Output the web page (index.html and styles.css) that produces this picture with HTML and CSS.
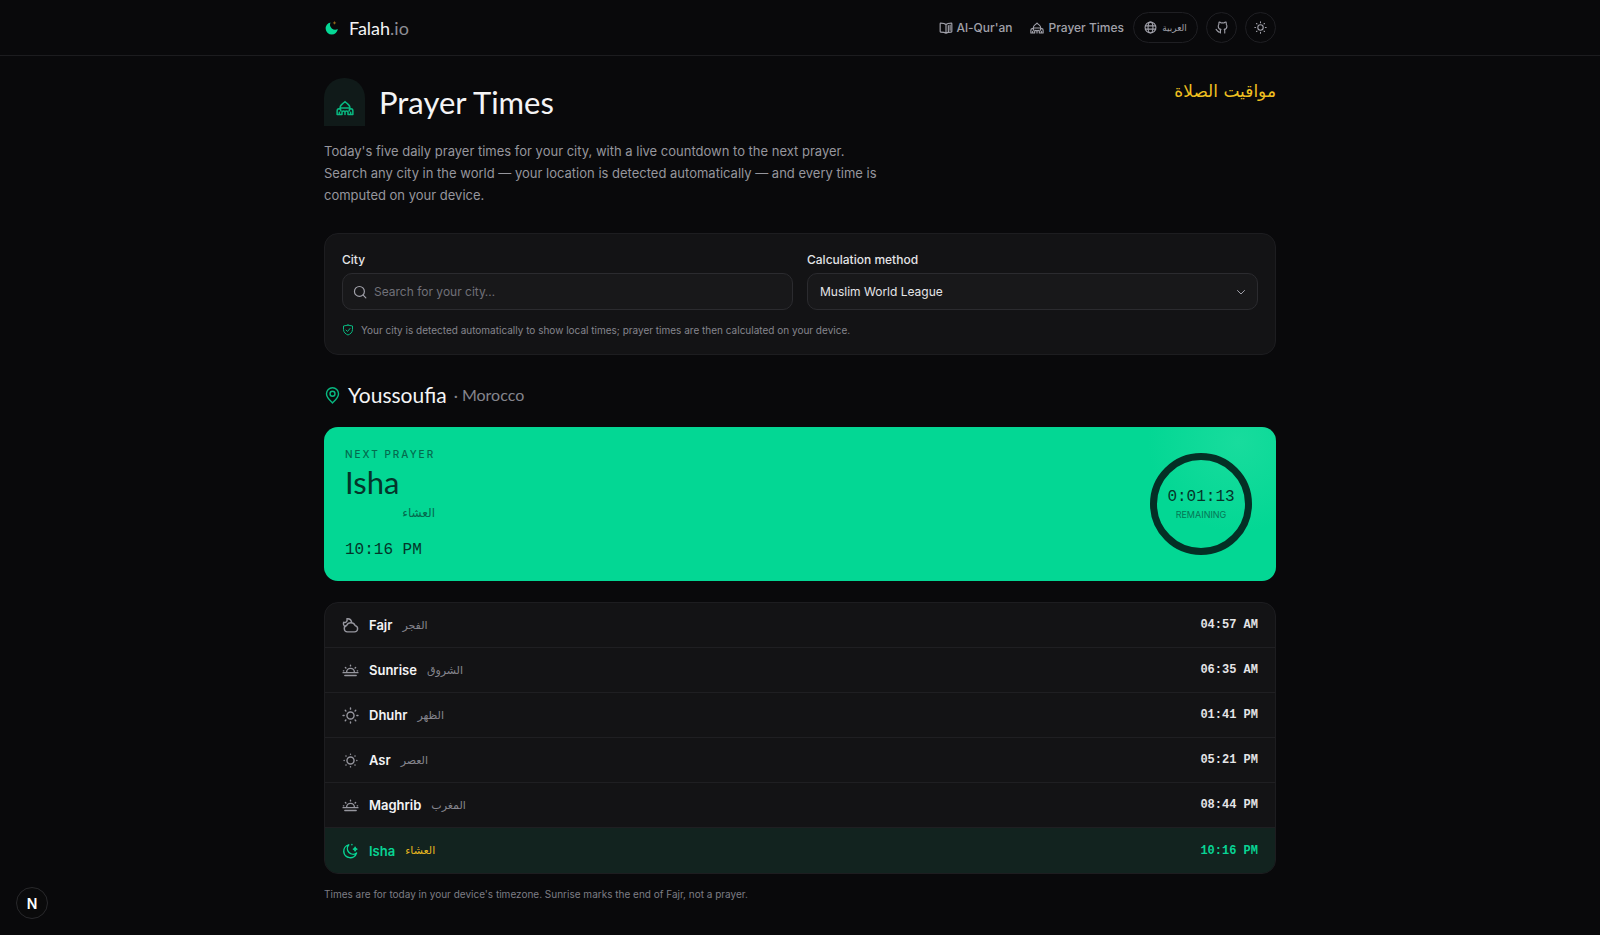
FILE: index.html
```html
<!DOCTYPE html>
<html lang="en">
<head>
<meta charset="utf-8">
<meta name="viewport" content="width=device-width, initial-scale=1">
<title>Prayer Times — Falah.io</title>
<link rel="stylesheet" href="styles.css">
</head>
<body>
<svg class="sprite" aria-hidden="true">
  <symbol id="mosque" viewBox="0 0 24 24"><path d="M5.500 12.500c-.7-5 3.500-5.500 6.500-9 3 3.500 7.200 4 6.500 9M5.500 12h13M8 20.500H1.500V16c0-2 1-3 2.500-3s2.500 1 2.500 3M16 20.500h6.500V16c0-2-1-3-2.500-3s-2.500 1-2.500 3M8 20.500V18c0-1.300.8-2 2-2s2 .7 2 2c0-1.300.8-2 2-2s2 .7 2 2v2.500M12 18v2.500M4.500 17.500v3M19.500 17.500v3"/></symbol>
  <symbol id="sun" viewBox="0 0 24 24"><circle cx="12" cy="12" r="5"/><path d="M12 1.500v1.500M12 21v1.500M1.500 12H3M21 12h1.500M4.600 4.600l.9.900M18.500 18.500l.9.900M4.600 19.400l.9-.9M18.500 5.500l.9-.9"/></symbol>
  <symbol id="low-sun" viewBox="0 0 24 24"><circle cx="12" cy="12" r="5"/><path d="M12 3v.1M12 20.900v.1M3 12h.1M20.900 12h.1M5.600 5.600l.1.100M18.300 18.300l.1.100M5.600 18.400l.1-.1M18.300 5.700l.1-.1"/></symbol>
  <symbol id="horizon" viewBox="0 0 24 24"><path d="M6.500 14.500a5.500 5.500 0 0 1 11 0M1.500 15h21M4 19h16M12 4.500v1M4.800 7.800l.7.700M19.200 7.800l-.7.700M2 12.500h.5M21.500 12.500h.5"/></symbol>
</svg>

<header class="topbar">
  <div class="wrap topbar-inner">
    <a class="brand" href="#">
      <svg class="brand-mark" viewBox="0 0 16 16" aria-hidden="true"><path fill="#05d795" d="M6.500 2.500a5.200 5.200 0 0 0 7.300 6.600A6.100 6.100 0 1 1 6.500 2.500z"/><path fill="#8f6518" d="m10.500 1 .6 1.300 1.300.6-1.300.6-.6 1.300-.6-1.300-1.300-.6 1.300-.6z"/></svg>
      <span>Falah<span class="brand-tld">.io</span></span>
    </a>
    <nav class="nav">
      <a class="nav-link" href="#"><svg class="icon" viewBox="0 0 24 24" aria-hidden="true"><path d="M12 6v15M12 6C10 4 6 3.500 3 3.500c-.7 0-1 .3-1 1V18c0 .7.300 1 1 1 3 0 7 .3 9 2 2-1.700 6-2 9-2 .7 0 1-.3 1-1V4.500c0-.7-.3-1-1-1-3 0-7 .5-9 2.500zM16 8v10M19 7v9"/></svg>Al-Qur'an</a>
      <a class="nav-link" href="#"><svg class="icon" aria-hidden="true"><use href="#mosque"/></svg>Prayer Times</a>
      <div class="actions">
        <button class="pill lang" type="button"><svg class="icon" viewBox="0 0 24 24" aria-hidden="true"><circle cx="12" cy="12" r="10"/><ellipse cx="12" cy="12" rx="4.500" ry="10"/><path d="M2.500 9h19M2.500 15h19"/></svg><span lang="ar" dir="rtl">العربية</span></button>
        <button class="pill" type="button" aria-label="GitHub"><svg class="icon" viewBox="0 0 24 24" aria-hidden="true"><path d="M10 20.500c-4 1-5-2-8-5M10 22v-4c0-1 .3-1.800 1-2.500-3.500-.5-5-2.500-5-6 0-1.300.4-2.500 1.300-3.500-.3-1.300-.2-2.600.4-4 1.600.2 2.800.8 3.800 1.700a13 13 0 0 1 5 0c1-.9 2.200-1.500 3.800-1.700.6 1.400.7 2.700.4 4 .9 1 1.300 2.200 1.300 3.500 0 3.500-1.500 5.500-5 6 .7.700 1 1.500 1 2.500v4"/></svg></button>
        <button class="pill" type="button" aria-label="Toggle theme"><svg class="icon" aria-hidden="true"><use href="#sun"/></svg></button>
      </div>
    </nav>
  </div>
</header>

<main class="wrap">
  <div class="hero">
    <div class="hero-title">
      <span class="arch"><svg class="icon" aria-hidden="true"><use href="#mosque"/></svg></span>
      <h1>Prayer Times</h1>
    </div>
    <p class="hero-ar" lang="ar" dir="rtl">مواقيت الصلاة</p>
  </div>
  <p class="intro">Today's five daily prayer times for your city, with a live countdown to the next prayer. Search any city in the world — your location is detected automatically — and every time is computed on your device.</p>

  <section class="panel settings">
    <div class="fields">
      <div class="field">
        <label for="city">City</label>
        <div class="control">
          <svg class="icon" viewBox="0 0 24 24" aria-hidden="true"><circle cx="11" cy="11" r="8.500"/><path d="m17.500 17.500 4.500 4.500"/></svg>
          <input id="city" type="text" placeholder="Search for your city…">
        </div>
      </div>
      <div class="field">
        <label for="method">Calculation method</label>
        <div class="control">
          <select id="method"><option>Muslim World League</option></select>
          <svg class="icon" viewBox="0 0 24 24" aria-hidden="true"><path d="m5 9 7 7 7-7"/></svg>
        </div>
      </div>
    </div>
    <p class="note"><svg class="icon" viewBox="0 0 24 24" aria-hidden="true"><path d="M12 2C9 2 7 4 3 4v7c0 6 5 9.500 9 11 4-1.500 9-5 9-11V4c-4 0-6-2-9-2zM8 12l3 3 5-6"/></svg>Your city is detected automatically to show local times; prayer times are then calculated on your device.</p>
  </section>

  <h2 class="place">
    <svg class="icon" viewBox="0 0 24 24" aria-hidden="true"><path d="M12 22.500c-3-3-8.500-7.500-8.500-13a8.500 8.500 0 0 1 17 0c0 5.500-5.500 10-8.500 13z"/><circle cx="12" cy="9.500" r="3.500"/></svg>
    Youssoufia <span class="country">· Morocco</span>
  </h2>

  <section class="next">
    <div class="next-info">
      <p class="eyebrow">Next prayer</p>
      <p class="next-name">Isha</p>
      <p class="next-ar" lang="ar" dir="rtl">العشاء</p>
      <p class="next-time">10:16 PM</p>
    </div>
    <div class="ring">
      <span class="count">0:01:13</span>
      <span class="remaining">Remaining</span>
    </div>
  </section>

  <ul class="panel times">
    <li><svg class="icon" viewBox="0 0 24 24" aria-hidden="true"><path d="M7.500 21h10a4.500 4.500 0 0 0 1-8.900A6.500 6.500 0 0 0 6.500 12 4.600 4.600 0 0 0 7.500 21zM3 12.500C1.500 11 1.800 9 2.300 7.500 5.500 8.500 8 6 7 2.500c3.500-.5 6 1.500 6.500 4.500"/></svg><span class="name">Fajr</span><span class="ar" lang="ar" dir="rtl">الفجر</span><time>04:57 AM</time></li>
    <li><svg class="icon" aria-hidden="true"><use href="#horizon"/></svg><span class="name">Sunrise</span><span class="ar" lang="ar" dir="rtl">الشروق</span><time>06:35 AM</time></li>
    <li><svg class="icon" aria-hidden="true"><use href="#sun"/></svg><span class="name">Dhuhr</span><span class="ar" lang="ar" dir="rtl">الظهر</span><time>01:41 PM</time></li>
    <li><svg class="icon" aria-hidden="true"><use href="#low-sun"/></svg><span class="name">Asr</span><span class="ar" lang="ar" dir="rtl">العصر</span><time>05:21 PM</time></li>
    <li><svg class="icon" aria-hidden="true"><use href="#horizon"/></svg><span class="name">Maghrib</span><span class="ar" lang="ar" dir="rtl">المغرب</span><time>08:44 PM</time></li>
    <li class="active"><svg class="icon" viewBox="0 0 24 24" aria-hidden="true"><path d="M20.500 15.500A8 8 0 0 1 9.500 4 9.200 9.200 0 1 0 20.500 15.500zM18.500 7.500c.3 1.700.8 2.200 2.500 2.500-1.700.3-2.200.8-2.500 2.500-.3-1.700-.8-2.200-2.500-2.500 1.700-.3 2.200-.8 2.500-2.500zM14 3.500v.5"/></svg><span class="name">Isha</span><span class="ar" lang="ar" dir="rtl">العشاء</span><time>10:16 PM</time></li>
  </ul>
  <p class="footnote">Times are for today in your device's timezone. Sunrise marks the end of Fajr, not a prayer.</p>
</main>

<button class="dev-badge" type="button" aria-label="Open developer tools">N</button>
</body>
</html>
```
FILE: styles.css
```css
* { box-sizing: border-box; }

body {
  margin: 0;
  background: #09090b;
  color: #f4f4f5;
  font-family: Inter, "DejaVu Sans", sans-serif;
  font-size: 14px;
}

h1, h2, p, ul { margin: 0; padding: 0; font-weight: 400; }
a { color: inherit; text-decoration: none; }
button, input, select { font: inherit; color: inherit; }

.sprite { display: none; }
.icon {
  width: 14px;
  height: 14px;
  flex: none;
  fill: none;
  stroke: currentColor;
  stroke-width: 2;
  stroke-linecap: round;
  stroke-linejoin: round;
}
[lang="ar"] { font-family: "DejaVu Sans", sans-serif; }

.wrap {
  width: 100%;
  max-width: 984px;
  margin: 0 auto;
  padding: 0 16px;
}

.topbar { border-bottom: 1px solid #1c1c1f; }
.topbar-inner {
  display: flex;
  align-items: center;
  justify-content: space-between;
  height: 55px;
}
.brand {
  display: flex;
  align-items: center;
  gap: 9px;
  font-family: Lato, sans-serif;
  font-size: 18px;
}
.brand-mark { width: 16px; height: 16px; }
.brand-tld { color: #8d8d95; }
.nav { display: flex; align-items: center; gap: 9px; color: #a1a1aa; }
.nav-link {
  display: flex;
  align-items: center;
  gap: 4px;
  font-size: 12px;
  font-weight: 500;
}
.nav-link:first-child { margin-right: 9px; }
.actions { display: flex; gap: 8px; }
.pill {
  display: flex;
  align-items: center;
  justify-content: center;
  gap: 5px;
  width: 31px;
  height: 31px;
  padding: 0;
  background: none;
  border: 1px solid #1f1f23;
  border-radius: 16px;
}
.pill .icon { width: 13px; height: 13px; }
.lang { width: 65px; font-size: 9px; }

.hero {
  display: flex;
  justify-content: space-between;
  padding-top: 22px;
}
.hero-title { display: flex; align-items: center; gap: 14px; }
.arch {
  display: flex;
  align-items: center;
  justify-content: center;
  width: 41px;
  height: 48px;
  padding-top: 12px;
  background: #101a19;
  border-radius: 20px 20px 0 0;
  color: #08b880;
}
.arch .icon { width: 18px; height: 18px; }
h1 { font-family: Lato, sans-serif; font-size: 31px; line-height: 48px; }
.hero-ar { color: #f0c020; font-size: 17px; line-height: 26px; }
.intro {
  max-width: 562px;
  margin-top: 14px;
  color: #96969d;
  font-size: 13px;
  line-height: 22px;
}

.panel {
  background: #131315;
  border: 1px solid #1d1d20;
  border-radius: 14px;
}
.settings { margin-top: 27px; padding: 17px 17px 16px; }
.fields { display: grid; grid-template-columns: 1fr 1fr; gap: 14px; }
.field { display: grid; gap: 5px; }
.field label { font-size: 12px; font-weight: 500; line-height: 17px; color: #e4e4e7; }
.control {
  display: flex;
  align-items: center;
  height: 37px;
  padding: 0 10px;
  gap: 7px;
  background: #18181a;
  border: 1px solid #2b2b2f;
  border-radius: 10px;
  color: #a1a1aa;
}
.control input, .control select {
  flex: 1;
  min-width: 0;
  height: 100%;
  padding: 0;
  background: none;
  border: 0;
  outline: 0;
  font-size: 12px;
}
.control input::placeholder { color: #707078; opacity: 1; }
.control select { padding-left: 2px; appearance: none; color: #e4e4e7; }
.control select + .icon { width: 12px; height: 12px; }
.note {
  display: flex;
  align-items: center;
  gap: 7px;
  margin-top: 12px;
  color: #85858d;
  font-size: 10px;
  line-height: 16px;
}
.note .icon { width: 12px; height: 12px; color: #08b880; }

.place {
  display: flex;
  align-items: center;
  gap: 7px;
  margin-top: 25px;
  font-family: Lato, sans-serif;
  font-size: 21px;
  line-height: 30px;
}
.place .icon { width: 17px; height: 17px; color: #08b880; }
.country { color: #85858d; font-size: 16px; }

.next {
  display: flex;
  align-items: center;
  justify-content: space-between;
  height: 154px;
  margin-top: 17px;
  padding: 0 24px 0 21px;
  background: radial-gradient(circle at 96% 10%, #18dc9d 0, #03d794 90px);
  border-radius: 14px;
  color: #04352a;
}
.eyebrow {
  color: #046b4e;
  font-size: 10px;
  font-weight: 500;
  letter-spacing: 2px;
  line-height: 14px;
  text-transform: uppercase;
}
.next-name { font-family: Lato, sans-serif; font-size: 31px; line-height: 42px; }
.next-ar { color: #05694d; font-size: 12px; line-height: 20px; }
.next-time {
  margin-top: 16px;
  font-family: "Liberation Mono", monospace;
  font-size: 16px;
  line-height: 22px;
}
.ring {
  display: flex;
  flex-direction: column;
  align-items: center;
  justify-content: center;
  gap: 3px;
  width: 102px;
  height: 102px;
  border: 7px solid #042f25;
  border-radius: 50%;
}
.count { font-family: "Liberation Mono", monospace; font-size: 16px; line-height: 18px; }
.remaining { color: #057655; font-size: 9px; line-height: 12px; text-transform: uppercase; }

.times { margin-top: 21px; overflow: hidden; list-style: none; }
.times li {
  display: flex;
  align-items: center;
  gap: 10px;
  height: 45px;
  padding: 0 17px;
  border-bottom: 1px solid #1f1f22;
}
.times li:last-child { border-bottom: 0; }
.times .icon { width: 17px; height: 17px; color: #96969e; }
.name { font-size: 13px; font-weight: 600; }
.ar { color: #85858d; font-size: 11px; }
time {
  margin-left: auto;
  color: #e4e4e7;
  font-family: "Liberation Mono", monospace;
  font-size: 12px;
  font-weight: 700;
}
.times .active { background: #12231f; color: #08d494; }
.active .icon, .active time { color: #08d494; }
.active .ar { color: #e5b51f; }
.times .active .icon { color: #08d494; }

.footnote { margin: 12px 0 32px; color: #7d7d85; font-size: 10px; line-height: 16px; }

.dev-badge {
  position: fixed;
  left: 16px;
  bottom: 16px;
  width: 32px;
  height: 32px;
  padding: 0;
  background: #0a0a0b;
  border: 1px solid #29292c;
  border-radius: 50%;
  color: #fff;
  font-size: 14px;
  font-weight: 600;
}
```
